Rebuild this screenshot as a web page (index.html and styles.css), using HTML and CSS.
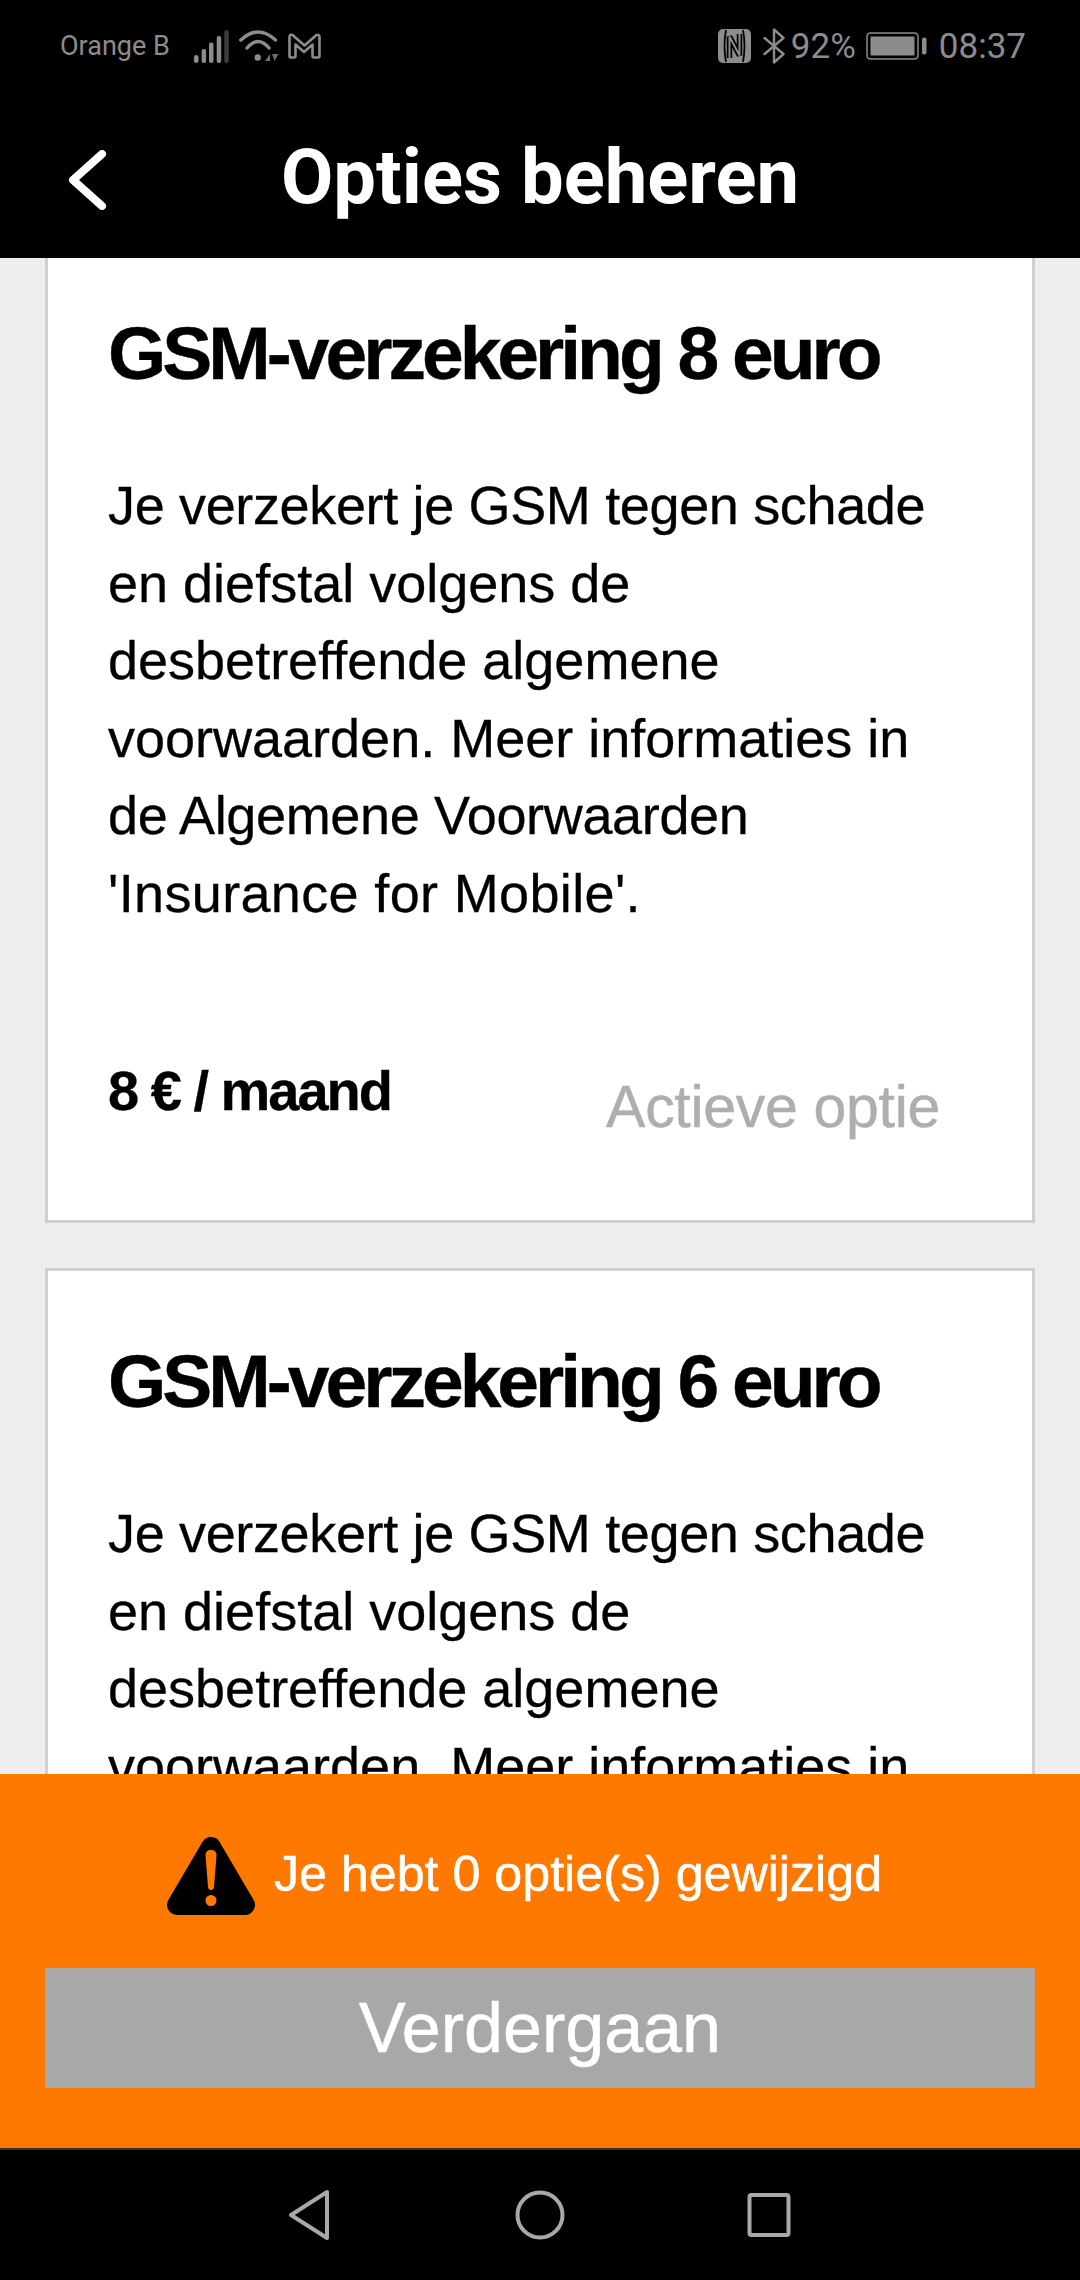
FILE: index.html
```html
<!DOCTYPE html>
<html lang="nl">
<head>
<meta charset="utf-8">
<title>Opties beheren</title>
<link rel="stylesheet" href="styles.css">
</head>
<body>
<div class="app">
  <header class="top">
    <div class="status">
      <div class="status-left">
        <span class="carrier">Orange B</span>
        <svg class="ic-signal" width="35" height="33" viewBox="0 0 35 33"><g fill="#8c8c8c"><rect x="0" y="25" width="4.500" height="8" rx="2.200"/><rect x="7.600" y="19" width="4.500" height="14" rx="2"/><rect x="15" y="12.500" width="4.500" height="20.500" rx="2"/><rect x="22.700" y="6" width="4.500" height="27" rx="2"/><rect x="30.300" y="0" width="4.500" height="33" rx="2" fill="#3c3c3c"/></g></svg>
        <svg class="ic-wifi" width="40" height="33" viewBox="0 0 40 33"><g fill="none" stroke="#8c8c8c" stroke-width="3.400" stroke-linecap="round"><path d="M1.800 10 Q19 -6 36.500 10"/><path d="M8 18 Q19 5 30 18"/></g><circle cx="18.700" cy="27.500" r="3.200" fill="#8c8c8c"/><path d="M26 31l5-7v7zM33 24h6.500l-4 7z" fill="#6e6e6e"/></svg>
        <svg class="ic-m" width="33" height="26" viewBox="0 0 33 26"><path d="M1.500 23V4q0-3 3-2l12 10.500L28.500 2q3-1 3 2v19q0 1.500-1.500 1.500h-4q-1.500 0-1.500-1.500V11.500l-8.500 7.500-8.500-7.500V23q0 1.500-1.500 1.500H3q-1.500 0-1.500-1.500z" fill="none" stroke="#8c8c8c" stroke-width="2.600" stroke-linejoin="round"/></svg>
      </div>
      <div class="status-right">
        <svg class="ic-nfc" width="33" height="34" viewBox="0 0 33 34"><rect width="33" height="34" rx="5" fill="#8c8c8c"/><path d="M8 1Q5 17 8 33M25 1Q28 17 25 33" fill="none" stroke="#000" stroke-width="1.800"/><path d="M11.500 29V7.500L21.500 26.500V5" fill="none" stroke="#000" stroke-width="5.500"/><path d="M11.500 29V7.500L21.500 26.500V5" fill="none" stroke="#8c8c8c" stroke-width="2"/></svg>
        <svg class="ic-bt" width="22" height="36" viewBox="0 0 22 36"><path d="M1.500 10l19 16-9.500 8.500V1.500l9.500 8.500-19 16" fill="none" stroke="#8c8c8c" stroke-width="2.400" stroke-linejoin="round" stroke-linecap="round"/></svg>
        <span class="pct">92%</span>
        <svg class="ic-batt" width="61" height="28" viewBox="0 0 61 28"><rect x="1" y="1" width="51" height="26" rx="3.500" fill="none" stroke="#8c8c8c" stroke-width="1.500"/><rect x="4.500" y="4.500" width="44" height="19" rx="1" fill="#8c8c8c"/><rect x="56" y="5.500" width="4.500" height="17" rx="2" fill="#8c8c8c"/></svg>
        <span class="time">08:37</span>
      </div>
    </div>
    <div class="titlebar">
      <svg class="back" width="40" height="60" viewBox="0 0 40 60"><path d="M35 4 L6 30 L35 56" fill="none" stroke="#fff" stroke-width="8" stroke-linecap="round" stroke-linejoin="round"/></svg>
      <h1 class="title">Opties beheren</h1>
    </div>
  </header>

  <main class="content">
    <div class="list">
      <section class="card">
        <h2 class="card-title">GSM-verzekering 8 euro</h2>
        <p class="card-text"><span class="ln-tight">Je verzekert je GSM tegen schade</span><br>en diefstal volgens de<br>desbetreffende algemene<br>voorwaarden. Meer informaties in<br><span class="ln-tight">de Algemene Voorwaarden</span><br><span class="ln-loose">'Insurance for Mobile'.</span></p>
        <div class="card-foot">
          <span class="price">8 € / maand</span>
          <span class="state">Actieve optie</span>
        </div>
      </section>
      <section class="card">
        <h2 class="card-title">GSM-verzekering 6 euro</h2>
        <p class="card-text"><span class="ln-tight">Je verzekert je GSM tegen schade</span><br>en diefstal volgens de<br>desbetreffende algemene<br>voorwaarden. Meer informaties in<br><span class="ln-tight">de Algemene Voorwaarden</span><br><span class="ln-loose">'Insurance for Mobile'.</span></p>
      </section>
    </div>
  </main>

  <footer class="notice">
    <div class="notice-row">
      <svg class="warn" width="88" height="78" viewBox="0 0 88 78"><path d="M44 10 L78 68 L10 68 Z" fill="#000" stroke="#000" stroke-width="20" stroke-linejoin="round"/><path d="M44 13c-3.500 0-5.500 2-5.500 5l2.500 32c.2 2 1.300 3 3 3s2.800-1 3-3l2.500-32c0-3-2-5-5.500-5z" fill="#ff7900"/><circle cx="44" cy="63.500" r="5.500" fill="#ff7900"/></svg>
      <span class="notice-text">Je hebt 0 optie(s) gewijzigd</span>
    </div>
    <button class="cta" type="button">Verdergaan</button>
  </footer>

  <nav class="navbar">
    <svg class="nav-back" width="44" height="52" viewBox="0 0 44 52"><path d="M40 3 L4 26 L40 49 Z" fill="none" stroke="#a8a8a8" stroke-width="4" stroke-linejoin="round"/></svg>
    <svg width="50" height="50" viewBox="0 0 50 50"><circle cx="25" cy="25" r="22.500" fill="none" stroke="#a8a8a8" stroke-width="4"/></svg>
    <svg width="44" height="46" viewBox="0 0 44 46"><rect x="2.500" y="3" width="39" height="40" rx="2" fill="none" stroke="#a8a8a8" stroke-width="4"/></svg>
  </nav>
</div>
</body>
</html>
```
FILE: styles.css
```css
* { box-sizing: border-box; }
html, body { margin: 0; padding: 0; }
body { background: #000; font-family: "Liberation Sans", Arial, sans-serif; }
.app { width: 1080px; height: 2280px; display: flex; flex-direction: column; overflow: hidden; background: #eee; }

.top { height: 258px; background: #000; flex: none; display: flex; flex-direction: column; }
.status { height: 92px; padding: 0 54px 0 60px; display: flex; justify-content: space-between; align-items: center; color: #8c8c8c; font-family: Roboto, sans-serif; }
.status-left, .status-right { display: flex; align-items: center; }
.carrier { font-size: 27px; margin-right: 24px; }
.ic-wifi { margin-left: 10px; }
.ic-m { margin-left: 9px; }
.status-right { font-size: 35px; }
.ic-bt { margin-left: 12px; }
.pct { margin-left: 6px; }
.ic-batt { margin-left: 10px; }
.time { margin-left: 12px; }

.titlebar { flex: 1; position: relative; display: flex; align-items: center; justify-content: center; padding-top: 4px; }
.back { position: absolute; left: 67px; top: 58px; }
.title { margin: 0; color: #fff; font: 700 76px/1 Roboto, sans-serif; }

.content { flex: 1; min-height: 0; overflow: hidden; }
.list { margin-top: -18px; padding: 0 45px; display: flex; flex-direction: column; gap: 45px; }
.card { background: #fff; border: 3px solid #d0d0d0; padding: 70px 61px 83px 60px; }
.card-title { margin: 0; font-size: 75px; line-height: 80px; font-weight: 700; color: #000; letter-spacing: -4px; -webkit-text-stroke: 0.4px #000; }
.card-text { margin: 74px 0 0; font-size: 54px; line-height: 77.500px; color: #000; -webkit-text-stroke: 0.3px #000; }
.ln-tight { letter-spacing: -0.350px; }
.ln-loose { letter-spacing: 0.350px; }
.card-foot { display: flex; justify-content: space-between; align-items: flex-start; margin-top: 129px; padding-right: 31px; }
.price { font-size: 56px; line-height: 60px; font-weight: 700; letter-spacing: -2px; -webkit-text-stroke: 0.3px #000; }
.state { font-size: 59px; line-height: 60px; color: #aeaeae; margin-top: 16px; -webkit-text-stroke: 0.5px #aeaeae; letter-spacing: -0.300px; }

.notice { flex: none; height: 374px; background: #ff7900; padding: 0 45px; display: flex; flex-direction: column; }
.notice-row { height: 194px; padding: 6px 31px 0 0; display: flex; align-items: center; justify-content: center; gap: 19px; }
.warn { margin-top: 4px; }
.notice-text { color: #fff; font-size: 50.200px; -webkit-text-stroke: 0.5px #fff; }
.cta { height: 120px; border: 0; background: #a8a8a8; color: #fff; font: 400 70px/1 "Liberation Sans", Arial, sans-serif; padding: 0; -webkit-text-stroke: 0.6px #fff; }

.navbar { flex: none; height: 132px; background: #000; border-top: 2px solid #333; display: flex; justify-content: center; align-items: center; gap: 182px; padding-right: 2px; }
.nav-back { margin-right: 2px; }
```
